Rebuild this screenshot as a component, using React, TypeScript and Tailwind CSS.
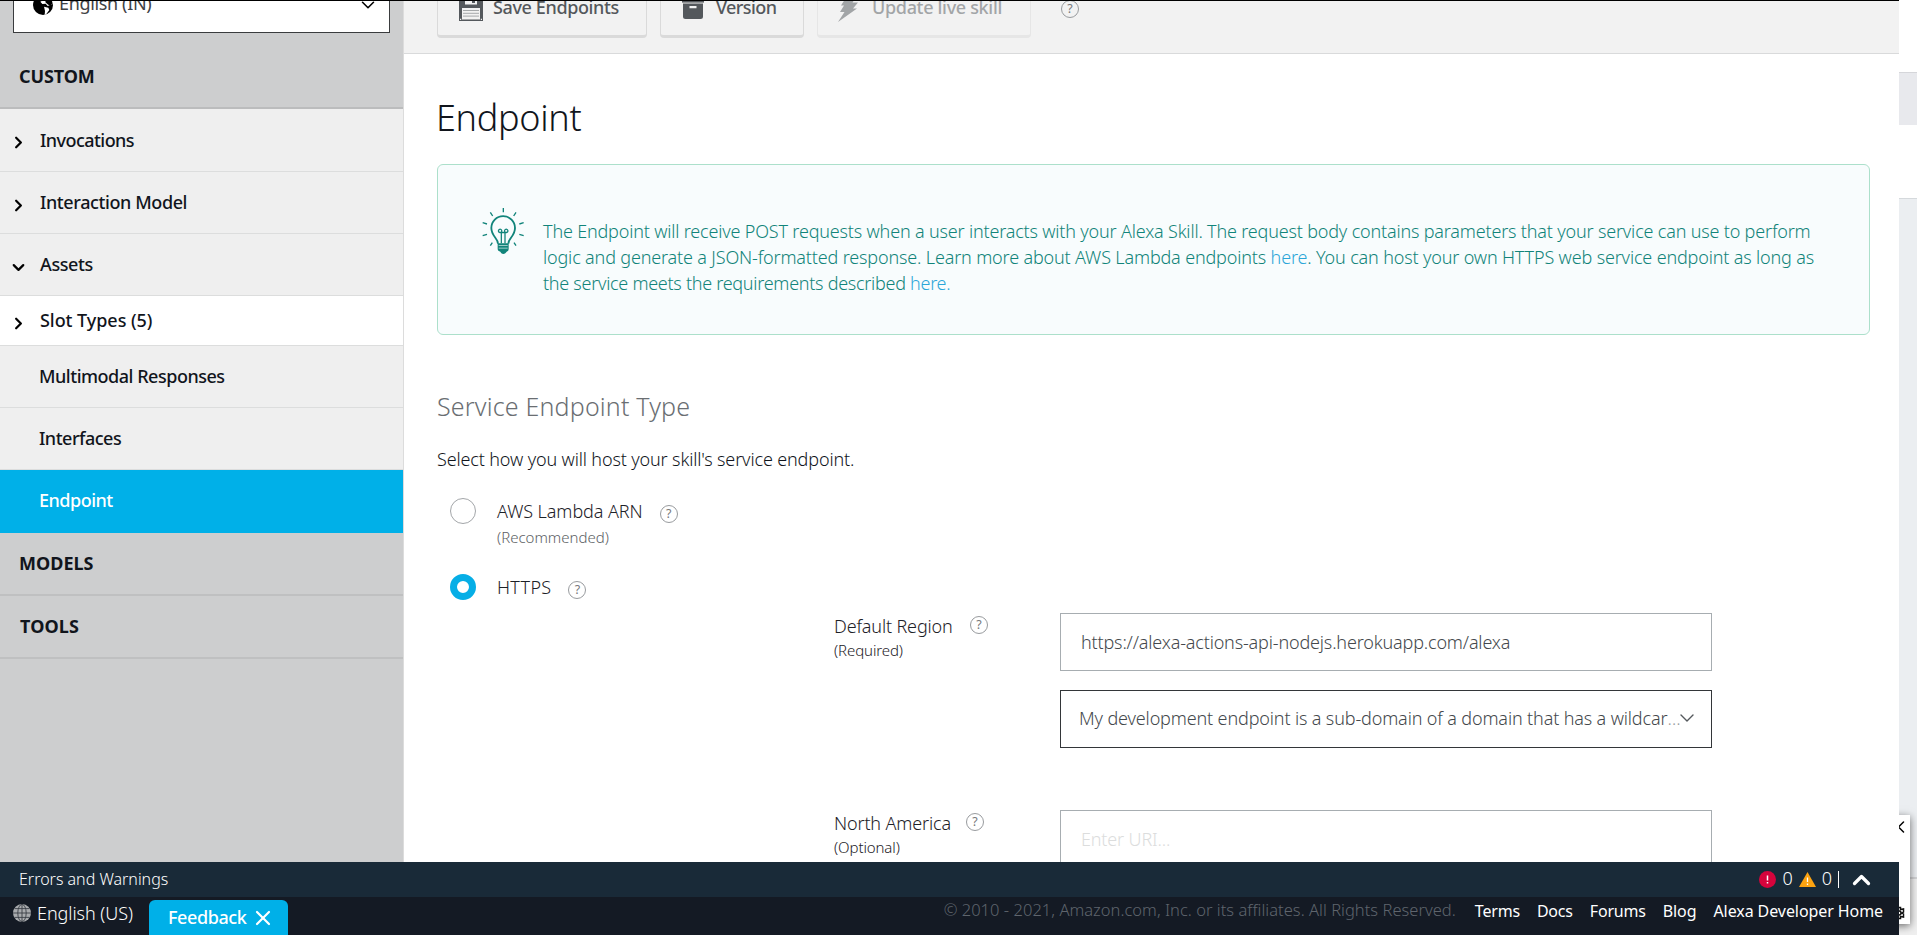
import React from "react";
import { ChevronDown, ChevronLeft, ChevronRight, ChevronUp, X } from "lucide-react";

function Help({ className = "" }: { className?: string }) {
  return (
    <span
      className={`flex size-[18px] shrink-0 items-center justify-center rounded-full border border-[#989b9e] text-[12.5px] leading-none font-normal text-[#77797b] ${className}`}
    >
      ?
    </span>
  );
}

function EarthIcon() {
  return (
    <svg viewBox="0 0 60 60" className="size-5 shrink-0">
      <circle cx="30" cy="30" r="30" fill="#000" />
      <path d="M12 5 L24 8 L30 16 L22 20 L28 27 L38 26 L44 33 L60 27 L60 12 L46 4 L38 10 L30 2 Z" fill="#fff" />
      <path d="M46 14 L56 14 L59 26 L50 32 L42 26 L36 20 Z" fill="#000" />
      <path d="M33 35 L46 38 L49 45 L40 57 L35 60 L36 48 Z" fill="#fff" />
    </svg>
  );
}

function GridGlobe() {
  return (
    <svg viewBox="0 0 18 18" className="size-[18px] shrink-0">
      <circle cx="9" cy="9" r="9" fill="#a9abae" />
      <g fill="none" stroke="#3a3f46" strokeWidth="0.9">
        <ellipse cx="9" cy="9" rx="4.2" ry="8.6" />
        <path d="M9 0v18M0 9h18M1.8 4.6h14.4M1.8 13.4h14.4" />
      </g>
    </svg>
  );
}

function SaveIcon() {
  return (
    <svg viewBox="0 0 24 24" className="size-6 shrink-0">
      <path d="M0 0h21l3 3v21H0z" fill="#54585c" />
      <path d="M6 0h12v7.5H6z" fill="#f2f2f2" />
      <path d="M13 1h3v5h-3z" fill="#54585c" />
      <path d="M3 11h18v11.5H3z" fill="#f2f2f2" />
      <path d="M4 13.5h16M4 16.3h16M4 19.1h16" stroke="#a5a8aa" strokeWidth="1" />
      <path d="M1 21.8h1.2v1.2H1zM21.8 21.8H23V23h-1.2z" fill="#f2f2f2" />
    </svg>
  );
}

function ArchiveIcon() {
  return (
    <svg viewBox="0 0 22 20" className="h-5 w-[22px] shrink-0" fill="#54585c">
      <path d="M0 0h22v3.6H0z" />
      <path fillRule="evenodd" d="M1 4.600h20v12.900a2.500 2.500 0 0 1-2.500 2.500h-15a2.500 2.500 0 0 1-2.500-2.500zM7.500 7v2.200h7V7z" />
    </svg>
  );
}

function BoltIcon() {
  return (
    <svg viewBox="0 0 20 26" className="h-[26px] w-5 shrink-0" fill="#a2a5a7">
      <path d="M9 0h10l-4.500 6.500H20l-5 6h4L0 26l6.500-10H2l4-6.500H3z" />
    </svg>
  );
}

function BulbIcon() {
  return (
    <svg viewBox="60 45 135 150" className="h-[50px] w-[45px] shrink-0" fill="none" stroke="#11847a" strokeWidth="4">
      <path d="M114 158c0-17-20-22-20-47a35 35 0 0 1 71 0c0 25-20 30-20 47" strokeWidth="5.500" />
      <path d="M113 157h33v18q0 6-6 7l-4 5q-6 4-12 0l-3-5q-8-1-8-7z" fill="#11847a" stroke="none" />
      <path d="M116 163.500h27M116 171.500h27" stroke="#f8fcfd" strokeWidth="1.800" />
      <path d="M124 157v-34M135 157v-34M124 123a5 5 0 1 0-5 1.500h21a5 5 0 1 0-5-1.500" strokeWidth="3.800" />
      <path d="M130 51v13M91 64l7 11M168 64l-7 11M68 95l13 4M191 95l-13 4M68 134l13-4M191 134l-13-4M91 164l6-9M168 164l-6-9" />
    </svg>
  );
}

type Row = { label: string; icon?: "right" | "down"; tracking: string; style?: string };

const rows: Row[] = [
  { label: "Invocations", icon: "right", tracking: "tracking-[-0.55px]", style: "h-[63px] bg-[#efefef]" },
  { label: "Interaction Model", icon: "right", tracking: "tracking-[-0.4px]", style: "h-[62px] bg-[#efefef]" },
  { label: "Assets", icon: "down", tracking: "tracking-[-0.4px]", style: "h-[62px] bg-[#efefef]" },
  { label: "Slot Types (5)", icon: "right", tracking: "tracking-[-0.05px]", style: "h-[50px] bg-white" },
  { label: "Multimodal Responses", tracking: "tracking-[-0.48px]", style: "h-[62px] bg-[#efefef]" },
  { label: "Interfaces", tracking: "tracking-[-0.5px]", style: "h-[62px] bg-[#efefef]" },
];

function Sidebar() {
  return (
    <aside className="flex w-[404px] shrink-0 flex-col overflow-hidden border-r border-[#dcdcdc] bg-[#cdcecf] text-[18px] font-medium text-[#11151c]">
      <div className="mx-[13px] -mt-6 flex h-14 shrink-0 items-center border border-[#3a3c3e] bg-white pr-3.5 pl-[19px] font-normal text-[#3f4245]">
        <EarthIcon />
        <span className="mb-1 ml-[6px] flex-1 tracking-[-0.35px]">English (IN)</span>
        <ChevronDown className="size-[22px] -mr-1 text-black" strokeWidth={1.7} />
      </div>
      <div className="mt-3 flex h-16 shrink-0 items-center border-b-2 border-[#bbbcbd] pl-[19px] font-bold tracking-[-0.1px]">
        CUSTOM
      </div>
      {rows.map((r) => (
        <div key={r.label} className={`flex shrink-0 items-center border-b border-[#dcdddd] ${r.style}`}>
          <span className={`flex shrink-0 pt-[5px] pl-[9px] ${r.icon ? "w-10" : "w-[39px]"}`}>
            {r.icon === "right" && <ChevronRight className="size-[19px] text-black" strokeWidth={2.8} />}
            {r.icon === "down" && <ChevronDown className="size-[19px] text-black" strokeWidth={2.8} />}
          </span>
          <span className={r.tracking}>{r.label}</span>
        </div>
      ))}
      <div className="flex h-[63px] shrink-0 items-center bg-[#00b0e8] pb-0.5 pl-[39px] tracking-[-0.5px] text-white">Endpoint</div>
      <div className="flex h-[63px] shrink-0 items-center border-b-2 border-[#bfc0c1] pl-[19px] font-bold">MODELS</div>
      <div className="flex h-[63px] shrink-0 items-center border-b-2 border-[#bfc0c1] pl-5 font-bold tracking-[0.1px]">TOOLS</div>
    </aside>
  );
}

function Toolbar() {
  return (
    <div className="flex h-[53px] shrink-0 items-start overflow-hidden border-b border-[#d9dadb] bg-[#f2f2f2] pl-[33px] text-[18px] font-medium text-[#54585c]">
      <div className="-mt-5 flex h-[57px] w-[210px] items-center rounded-[4px] border border-b-[3px] border-[#dadada] pl-[21px]">
        <SaveIcon />
        <span className="mb-[3px] ml-[10px] tracking-[-0.37px] whitespace-nowrap">Save Endpoints</span>
      </div>
      <div className="-mt-5 ml-[13px] flex h-[57px] w-36 items-center rounded-[4px] border border-b-[3px] border-[#dadada] pl-[21px]">
        <ArchiveIcon />
        <span className="mb-[3px] ml-[12px] tracking-[-0.6px]">Version</span>
      </div>
      <div className="-mt-5 ml-[13px] flex h-[57px] w-[214px] items-center rounded-[4px] border border-b-[3px] border-[#e6e6e6] pl-5 text-[#a2a5a7]">
        <BoltIcon />
        <span className="mb-[3px] ml-[14px] tracking-[-0.32px] whitespace-nowrap">Update live skill</span>
      </div>
      <Help className="-mt-px ml-[30px]" />
    </div>
  );
}

function RegionLabel({ name, note, width }: { name: string; note: string; width: string }) {
  return (
    <div className="flex w-[226px] shrink-0 text-[#1d2127]">
      <div className={`flex flex-col ${width}`}>
        <span className="leading-[27px] tracking-[-0.15px] whitespace-nowrap">{name}</span>
        <span className="text-[15px] leading-5 tracking-[-0.1px]">{note}</span>
      </div>
      <Help className="mt-[3px]" />
    </div>
  );
}

function Main() {
  return (
    <main className="flex flex-1 flex-col overflow-hidden bg-white text-[18px] font-light">
      <Toolbar />
      <div className="flex flex-col pr-[29px] pl-[33px]">
        <h1 className="-ml-px mt-[44px] text-[36px] leading-10 tracking-[-0.3px] text-[#11151c]">Endpoint</h1>
        <div className="mt-[26px] flex h-[171px] shrink-0 rounded-md border border-[#ace0cb] bg-[#f8fcfd] pt-[41px] pl-[42px] text-[#11847a]">
          <BulbIcon />
          <p className="mt-3 ml-[18px] leading-[26px] tracking-[-0.18px] whitespace-nowrap">
            The Endpoint will receive POST requests when a user interacts with your Alexa Skill. The request body contains
            parameters that your service can use to perform
            <br />
            <span className="tracking-[-0.16px]">
              logic and generate a JSON-formatted response. Learn more about AWS Lambda endpoints{" "}
              <a className="text-[#2ba6d8]">here</a>. You can host your own HTTPS web service endpoint as long as
            </span>
            <br />
            <span className="tracking-[-0.28px]">
              the service meets the requirements described <a className="text-[#2ba6d8]">here.</a>
            </span>
          </p>
        </div>
        <h2 className="mt-[55px] text-[25px] leading-8 tracking-[0.18px] text-[#6a6e72]">Service Endpoint Type</h2>
        <p className="mt-6 leading-[27px] tracking-[-0.14px] text-[#11151c]">Select how you will host your skill&apos;s service endpoint.</p>

        <div className="mt-[25px] flex items-start pl-[13px] text-[#1d2127]">
          <span className="size-[26px] rounded-full border border-[#a3a6a9] bg-white" />
          <div className="ml-[21px] flex flex-col">
            <span className="leading-[26px] tracking-[-0.08px]">AWS Lambda ARN</span>
            <span className="mt-[3px] text-[15px] leading-5 text-[#5d6165]">(Recommended)</span>
          </div>
          <Help className="mt-[7px] ml-[17px]" />
        </div>
        <div className="mt-[27px] flex items-start pl-[13px] text-[#1d2127]">
          <span className="size-[26px] rounded-full border-[7px] border-[#06aee6] bg-white" />
          <span className="ml-[21px] leading-[26px] tracking-[0.3px]">HTTPS</span>
          <Help className="mt-[7px] ml-[17px]" />
        </div>

        <div className="mt-[13px] flex pl-[397px]">
          <RegionLabel name="Default Region" note="(Required)" width="w-[136px]" />
          <div className="flex w-[652px] flex-col gap-[19px] text-[#44484c]">
            <div className="flex h-[58px] items-center border border-[#a7adb1] pt-px pl-5 tracking-[-0.16px]">
              https://alexa-actions-api-nodejs.herokuapp.com/alexa
            </div>
            <div className="flex h-[58px] items-center border border-[#333639] pl-[18px] pb-0.5 tracking-[-0.14px]">
              <span className="whitespace-nowrap">My development endpoint is a sub-domain of a domain that has a wildcar</span>
              <span className="text-[#9a9da0]">…</span>
              <ChevronDown className="-ml-[5px] size-6 shrink-0 text-[#54585c]" strokeWidth={1.4} />
            </div>
          </div>
        </div>
        <div className="mt-[62px] flex pl-[397px]">
          <RegionLabel name="North America" note="(Optional)" width="w-[132px]" />
          <div className="flex h-[58px] w-[652px] items-center border border-[#a7adb1] pl-5 tracking-[-0.16px] text-[#dcdddd]">
            Enter URI...
          </div>
        </div>
      </div>
    </main>
  );
}

function BottomBars() {
  return (
    <footer className="flex shrink-0 flex-col text-white">
      <div className="flex h-[35px] items-center bg-[#192a38] pr-[27px] pl-[19px] text-[16px] font-light">
        <span className="mb-px flex-1">Errors and Warnings</span>
        <svg viewBox="0 0 17 17" className="size-[17px]">
          <circle cx="8.500" cy="8.500" r="8.500" fill="#d6043c" />
          <path d="M8.500 4.500v5M8.500 11v1.600" stroke="#fff" strokeWidth="1.500" />
        </svg>
        <span className="mb-0.5 ml-1.5 text-[18px]">0</span>
        <svg viewBox="0 0 17 15" className="ml-1.5 h-[15px] w-[17px]">
          <path d="M8.500 0L17 15H0z" fill="#fca311" />
          <path d="M8.500 5.500v4.500M8.500 11.500v1.600" stroke="#fff" strokeWidth="1.300" />
        </svg>
        <span className="mb-0.5 ml-1.5 text-[18px]">0</span>
        <span className="ml-[6px] h-[17px] w-px bg-white" />
        <ChevronUp className="ml-[7px] h-7 w-[31px] shrink-0 -mr-[5px]" strokeWidth={2.8} />
      </div>
      <div className="flex h-[38px] bg-[#141a24] pr-4 pl-[13px]">
        <div className="flex h-8 items-center text-[18px] font-light">
          <GridGlobe />
          <span className="ml-[6px] tracking-[-0.05px]">English (US)</span>
        </div>
        <div className="mt-[3px] ml-[16px] flex w-[139px] items-center rounded-t-md bg-[#00b0e8] pl-[19px] text-[18px] font-medium">
          <span className="tracking-[-0.4px]">Feedback</span>
          <X className="ml-[5px] size-6" strokeWidth={2.2} />
        </div>
        <nav className="ml-auto flex h-[27px] items-center gap-[17px] text-[16px] tracking-[-0.08px]">
          <span className="mr-[2px] text-[16.5px] font-light tracking-[0.03px] text-[#5f656d]">
            © 2010 - 2021, Amazon.com, Inc. or its affiliates. All Rights Reserved.
          </span>
          <a className="tracking-[-0.2px]">Terms</a>
          <a className="tracking-[-0.2px]">Docs</a>
          <a className="tracking-[-0.2px]">Forums</a>
          <a>Blog</a>
          <a>Alexa Developer Home</a>
        </nav>
      </div>
    </footer>
  );
}

function RightEdge() {
  return (
    <div className="relative flex w-[18px] shrink-0 flex-col overflow-hidden bg-white">
      <div className="h-[72px]" />
      <div className="h-[53px] border-t border-[#d5d6da] bg-[#e8e9ed]" />
      <div className="h-[73px]" />
      <div className="h-[679px] border-t border-[#d5d9dc] bg-[#ebeef1]" />
      <div className="flex-1 border-t-2 border-[#d2d3d5] bg-[#efefef]" />
      <div className="absolute top-[815px] -left-5 flex h-[109px] w-[31px] flex-col items-end justify-between bg-white pt-0.5 pb-1 shadow-[0_2px_8px_rgba(0,0,0,0.55)]">
        <ChevronLeft className="-mr-px size-5 shrink-0 text-black" strokeWidth={1.8} />
        <svg viewBox="0 0 6 14" className="mr-[5px] h-3.5 w-1.5" fill="none" stroke="#111" strokeWidth="1.500">
          <path d="M0 1.500h1.500v2l3-.5v3L3 7l1.500 1v3l-3-.5v2H0M0 5a2 2 0 0 1 0 4" />
        </svg>
      </div>
    </div>
  );
}

export default function App() {
  return (
    <div className="flex h-[935px] w-[1917px] overflow-hidden font-['Noto_Sans',sans-serif]">
      <div className="flex flex-1 flex-col border-t border-black">
        <div className="flex min-h-0 flex-1">
          <Sidebar />
          <Main />
        </div>
        <BottomBars />
      </div>
      <RightEdge />
    </div>
  );
}
